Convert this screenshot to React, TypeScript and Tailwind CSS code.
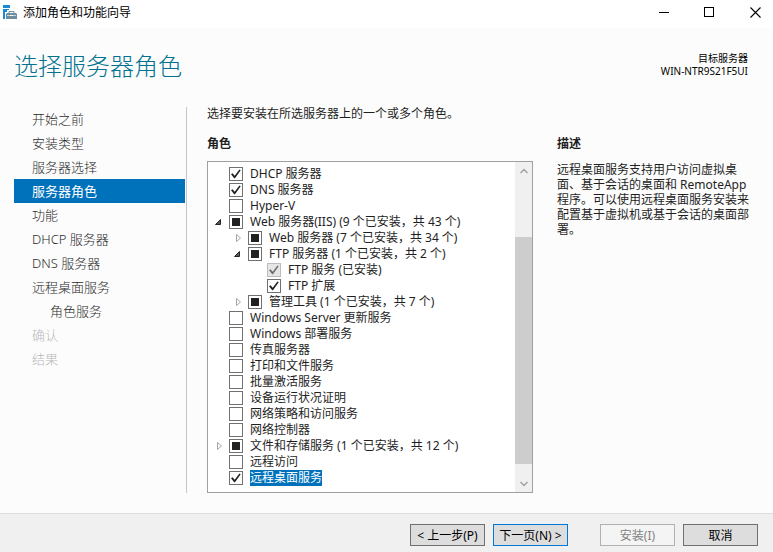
import { useState } from "react";

type CheckState = "on" | "off" | "partial";

interface Role {
  id: string;
  label: string;
  level: 0 | 1 | 2;
  state: CheckState;
  arrow?: "open" | "closed";
  disabled?: boolean;
  selected?: boolean;
}

const initialRoles: Role[] = [
  { id: "dhcp", label: "DHCP 服务器", level: 0, state: "on" },
  { id: "dns", label: "DNS 服务器", level: 0, state: "on" },
  { id: "hyperv", label: "Hyper-V", level: 0, state: "off" },
  { id: "iis", label: "Web 服务器(IIS) (9 个已安装，共 43 个)", level: 0, state: "partial", arrow: "open" },
  { id: "web", label: "Web 服务器 (7 个已安装，共 34 个)", level: 1, state: "partial", arrow: "closed" },
  { id: "ftp", label: "FTP 服务器 (1 个已安装，共 2 个)", level: 1, state: "partial", arrow: "open" },
  { id: "ftp-service", label: "FTP 服务 (已安装)", level: 2, state: "on", disabled: true },
  { id: "ftp-ext", label: "FTP 扩展", level: 2, state: "on" },
  { id: "tools", label: "管理工具 (1 个已安装，共 7 个)", level: 1, state: "partial", arrow: "closed" },
  { id: "wsus", label: "Windows Server 更新服务", level: 0, state: "off" },
  { id: "wds", label: "Windows 部署服务", level: 0, state: "off" },
  { id: "fax", label: "传真服务器", level: 0, state: "off" },
  { id: "print", label: "打印和文件服务", level: 0, state: "off" },
  { id: "volume", label: "批量激活服务", level: 0, state: "off" },
  { id: "health", label: "设备运行状况证明", level: 0, state: "off" },
  { id: "policy", label: "网络策略和访问服务", level: 0, state: "off" },
  { id: "controller", label: "网络控制器", level: 0, state: "off" },
  { id: "storage", label: "文件和存储服务 (1 个已安装，共 12 个)", level: 0, state: "partial", arrow: "closed" },
  { id: "remote", label: "远程访问", level: 0, state: "off" },
  { id: "rds", label: "远程桌面服务", level: 0, state: "on", selected: true },
];

const steps = [
  { label: "开始之前" },
  { label: "安装类型" },
  { label: "服务器选择" },
  { label: "服务器角色", current: true },
  { label: "功能" },
  { label: "DHCP 服务器" },
  { label: "DNS 服务器" },
  { label: "远程桌面服务" },
  { label: "角色服务", nested: true },
  { label: "确认", disabled: true },
  { label: "结果", disabled: true },
];

const indents = ["pl-0", "pl-[19px]", "pl-[38px]"];

function WizardIcon() {
  return (
    <svg width="14" height="14" viewBox="0 0 14 14" aria-hidden="true">
      <path d="M0 0h7v3H0zM0 4h6v1H4v2H2v7H0z" fill="#1a8ad6" />
      <path d="M6 8V6.500h5V8" fill="none" stroke="#6d8ea0" />
      <path d="M4 8h9l1 1v5H3V9z" fill="#6d8ea0" />
      <path d="M4 10.500h3M10 10.500h3" stroke="#c3d2da" />
      <path d="M7 10h3v1H7z" fill="#fff" />
    </svg>
  );
}

function TreeArrow({ open }: { open: boolean }) {
  return (
    <button type="button" aria-label={open ? "折叠" : "展开"} className="flex h-4 w-[10px] items-center justify-center">
      <svg width="10" height="10" viewBox="0 0 10 10">
        {open ? (
          <path d="M7.500 2.500v5h-5z" fill="#595959" stroke="#262626" />
        ) : (
          <path d="M4.500 1.500v7l4-3.500z" fill="#fff" stroke="#a6a6a6" />
        )}
      </svg>
    </button>
  );
}

function RoleRow({ role, onToggle }: { role: Role; onToggle: () => void }) {
  return (
    <li className={`flex h-4 items-center ${indents[role.level]}`}>
      <span className="ml-[5px] mr-[6px] flex w-[10px] shrink-0">
        {role.arrow && <TreeArrow open={role.arrow === "open"} />}
      </span>
      <span className="relative flex size-[14px] shrink-0">
        <input
          id={role.id}
          type="checkbox"
          checked={role.state === "on"}
          disabled={role.disabled}
          onChange={onToggle}
          ref={(el) => {
            if (el) el.indeterminate = role.state === "partial";
          }}
          className="size-[14px] appearance-none border border-[#707070] bg-white disabled:border-[#bcbcbc] disabled:bg-[#e6e6e6]"
        />
        {role.state === "partial" && (
          <span className="pointer-events-none absolute inset-[3px] bg-[#212121]" />
        )}
        {role.state === "on" && (
          <svg
            className={`pointer-events-none absolute inset-0 ${role.disabled ? "text-[#707070]" : "text-[#212121]"}`}
            width="14"
            height="14"
            viewBox="0 0 14 14"
          >
            <path d="M2 7.200L3.600 6.200L5.700 8.800L10.400 2.400L11.700 3.200L6 11.300H5.200z" fill="currentColor" />
          </svg>
        )}
      </span>
      <label
        htmlFor={role.id}
        className={`ml-[7px] whitespace-nowrap text-xs leading-4 ${
          role.selected ? "bg-[#0072bc] text-white" : "text-[#1e1e1e]"
        }`}
      >
        {role.label}
      </label>
    </li>
  );
}

export default function App() {
  const [roles, setRoles] = useState(initialRoles);
  const toggle = (id: string) =>
    setRoles((list) =>
      list.map((r) => (r.id === id ? { ...r, state: r.state === "on" ? "off" : "on" } : r)),
    );
  const wizardButton = "h-[22px] w-[75px] border pt-0.5 text-xs leading-none whitespace-nowrap";

  return (
    <div className="flex min-h-screen flex-col bg-[#fcfcfc] font-['Noto_Sans','Noto_Sans_CJK_SC',sans-serif] text-xs text-[#1e1e1e]">
      <header className="flex h-7 items-center bg-white pb-1 pl-[3px] text-black">
        <WizardIcon />
        <span className="ml-1.5 flex-1 pt-0.5 leading-4">添加角色和功能向导</span>
        <div className="flex h-6 gap-[10px]">
          <button type="button" aria-label="最小化" className="flex w-9 items-center justify-center">
            <svg width="11" height="11" viewBox="0 0 11 11" shapeRendering="crispEdges">
              <path d="M1 5.500h10" stroke="#000" />
            </svg>
          </button>
          <button type="button" aria-label="最大化" className="flex w-9 items-center justify-center">
            <svg width="10" height="10" viewBox="0 0 10 10" shapeRendering="crispEdges">
              <path d="M0.500 0.500h9v9h-9z" fill="none" stroke="#000" />
            </svg>
          </button>
          <button type="button" aria-label="关闭" className="flex w-9 items-center justify-center">
            <svg width="11" height="11" viewBox="0 0 11 11">
              <path d="M0.500 0.500l10 10M10.500 0.500l-10 10" stroke="#000" strokeWidth="1.100" />
            </svg>
          </button>
        </div>
      </header>

      <div className="flex h-[79px] items-center justify-between pb-1 pl-[14px] pr-[25px]">
        <h1 className="text-2xl font-light text-[#00728f]">选择服务器角色</h1>
        <div className="pb-0.5 text-right text-[10px] leading-[13px] text-black">
          <p>目标服务器</p>
          <p>WIN-NTR9S21F5UI</p>
        </div>
      </div>

      <main className="flex flex-1 pb-5 pr-[23px]">
        <nav className="w-[187px] shrink-0 border-r border-[#c6c6c6] pl-[14px] pr-px">
          <ul>
            {steps.map((s) => (
              <li key={s.label}>
                <button
                  type="button"
                  disabled={s.disabled}
                  aria-current={s.current ? "step" : undefined}
                  className={`block h-6 w-full text-left text-[13px] leading-6 ${
                    s.nested ? "pl-9" : "pl-[18px]"
                  } ${
                    s.current
                      ? "bg-[#0072bc] font-normal text-white"
                      : s.disabled
                        ? "font-light text-[#b8b8b8]"
                        : "font-light text-[#2a2a2a]"
                  }`}
                >
                  {s.label}
                </button>
              </li>
            ))}
          </ul>
        </nav>

        <section className="ml-5 flex min-w-0 flex-1 flex-col">
          <p className="h-7 leading-[14px]">选择要安装在所选服务器上的一个或多个角色。</p>
          <div className="flex flex-1 gap-6">
            <div className="flex min-w-0 flex-1 flex-col">
              <h2 className="h-[26px] font-bold leading-[18px]">角色</h2>
              <div className="flex flex-1 border border-[#a0a0a0] bg-white">
                <ul className="min-w-0 flex-1 pb-[6px] pt-1">
                  {roles.map((r) => (
                    <RoleRow key={r.id} role={r} onToggle={() => toggle(r.id)} />
                  ))}
                </ul>
                <div className="flex w-[17px] shrink-0 flex-col bg-[#f0f0f0]">
                  <button type="button" aria-label="向上滚动" className="flex h-[17px] items-center justify-center">
                    <svg width="8" height="6" viewBox="0 0 8 6">
                      <path d="M0.500 5L4 1.500L7.500 5" fill="none" stroke="#a0a0a0" strokeWidth="1.500" />
                    </svg>
                  </button>
                  <div className="flex flex-1 flex-col">
                    <div className="grow-[58]" />
                    <div className="grow-[227] bg-[#cdcdcd]" />
                    <div className="grow-[11]" />
                  </div>
                  <button type="button" aria-label="向下滚动" className="flex h-[17px] items-center justify-center">
                    <svg width="8" height="6" viewBox="0 0 8 6">
                      <path d="M0.500 1L4 4.500L7.500 1" fill="none" stroke="#a0a0a0" strokeWidth="1.500" />
                    </svg>
                  </button>
                </div>
              </div>
            </div>
            <aside className="w-[193px] shrink-0">
              <h2 className="mb-px h-[26px] font-bold leading-[18px]">描述</h2>
              <p className="leading-[15px]">
                远程桌面服务支持用户访问虚拟桌面、基于会话的桌面和 RemoteApp
                程序。可以使用远程桌面服务安装来配置基于虚拟机或基于会话的桌面部署。
              </p>
            </aside>
          </div>
        </section>
      </main>

      <footer className="flex h-[39px] items-center justify-end border-t border-[#dcdcdc] bg-[#f0f0f0] pb-px pr-[15px] pt-[5px] text-black">
        <button type="button" className={`${wizardButton} border-[#707070] bg-[#dddddd]`}>&lt; 上一步(P)</button>
        <button type="button" className={`${wizardButton} ml-2 border-[#0078d7] bg-[#dddddd]`}>下一页(N) &gt;</button>
        <button type="button" disabled className={`${wizardButton} ml-8 border-[#adb2b5] bg-[#f4f4f4] text-[#838383]`}>安装(I)</button>
        <button type="button" className={`${wizardButton} ml-2 border-[#707070] bg-[#dddddd]`}>取消</button>
      </footer>
    </div>
  );
}
